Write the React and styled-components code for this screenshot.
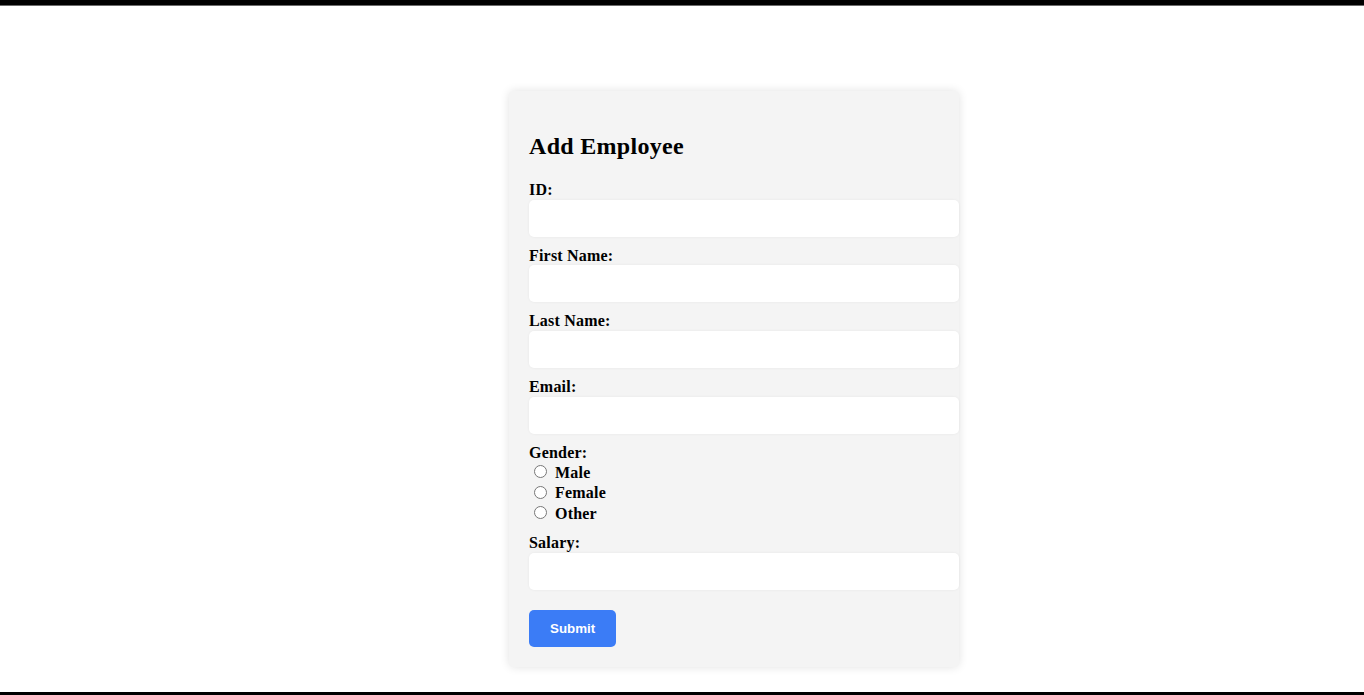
import React from "react";
import styled, { createGlobalStyle } from "styled-components";

const Global = createGlobalStyle`
  html, body { margin: 0; padding: 0; background: #fff; }
  body { font-family: "Liberation Serif", "Times New Roman", serif; color: #000; }
  * { box-sizing: content-box; }
`;

const Page = styled.div`
  height: 695px;
  display: flex;
  flex-direction: column;
  overflow: hidden;
`;

const TopBar = styled.div`
  height: 5px;
  background: #000;
  border-bottom: 1px solid #6b6b6b;
  flex: none;
`;

const Main = styled.main`
  flex: 1;
  display: flex;
  justify-content: center;
  align-items: flex-start;
  padding-left: 104px;
  padding-top: 85px;
`;

const BottomBar = styled.div`
  height: 3px;
  background: #000;
  flex: none;
`;

const Card = styled.form`
  width: 410px;
  padding: 20px;
  background: #f4f4f4;
  border-radius: 5px;
  box-shadow: 0 0 10px rgba(0, 0, 0, 0.12);
`;

const Title = styled.h2`
  font-size: 24px;
  font-weight: bold;
  margin: 21px 0 21px;
  line-height: 28px;
  letter-spacing: 0.3px;
`;

const Label = styled.label`
  display: block;
  font-weight: bold;
  font-size: 16px;
  line-height: 18.67px;
  letter-spacing: 0.2px;
`;

const Input = styled.input`
  display: block;
  width: 100%;
  padding: 10px;
  margin: 0 0 10px;
  border: none;
  border-radius: 5px;
  background: #fff;
  font-size: 13.33px;
  line-height: 17px;
  height: 17px;
  font-family: "Liberation Sans", Arial, sans-serif;
  box-shadow: 0 0 3px rgba(0, 0, 0, 0.06);
  outline: none;
`;

const RadioGroup = styled.div`
  margin-bottom: 10px;
`;

const RadioRow = styled.div`
  font-weight: bold;
  font-size: 16px;
  height: 20.5px;
  display: flex;
  align-items: center;
  letter-spacing: 0.2px;
`;

const Radio = styled.input`
  width: 13px;
  height: 13px;
  margin: 0 8px 0 5px;
  position: relative;
  top: -1px;
`;

const Button = styled.button`
  margin-top: 10px;
  padding: 10px 21px;
  height: 17px;
  line-height: 17px;
  box-sizing: content-box;
  border: none;
  border-radius: 5px;
  background: #3b7cf6;
  color: #fff;
  font-family: "Liberation Sans", Arial, sans-serif;
  font-weight: bold;
  font-size: 13.33px;
  cursor: pointer;
`;

const fields = [
  { id: "id", label: "ID:" },
  { id: "firstName", label: "First Name:" },
  { id: "lastName", label: "Last Name:" },
  { id: "email", label: "Email:" },
];

export default function App() {
  return (
    <Page>
      <Global />
      <TopBar />
      <Main>
        <Card onSubmit={(e) => e.preventDefault()}>
          <Title>Add Employee</Title>
          {fields.map((f) => (
            <React.Fragment key={f.id}>
              <Label htmlFor={f.id}>{f.label}</Label>
              <Input id={f.id} type="text" />
            </React.Fragment>
          ))}
          <Label>Gender:</Label>
          <RadioGroup>
            {["Male", "Female", "Other"].map((g) => (
              <RadioRow key={g}>
                <Radio type="radio" name="gender" id={g} />
                <label htmlFor={g}>{g}</label>
              </RadioRow>
            ))}
          </RadioGroup>
          <Label htmlFor="salary">Salary:</Label>
          <Input id="salary" type="text" />
          <Button type="submit">Submit</Button>
        </Card>
      </Main>
      <BottomBar />
    </Page>
  );
}
